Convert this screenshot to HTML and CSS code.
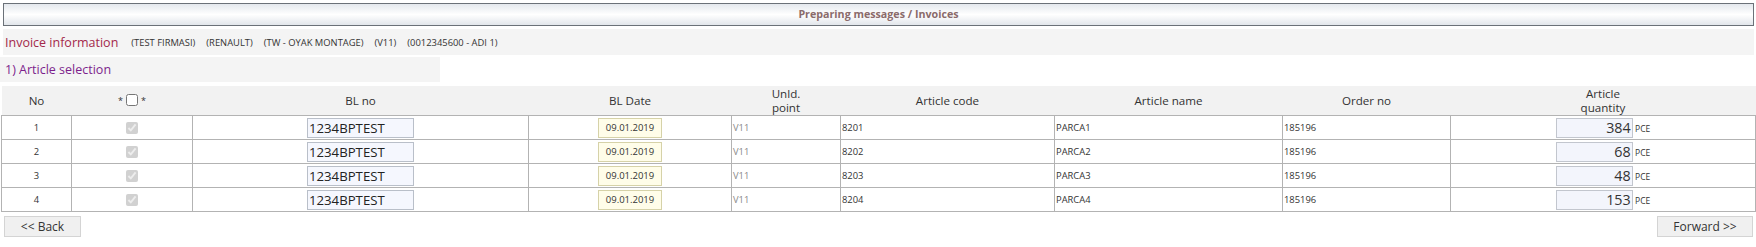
FILE: index.html
```html
<!DOCTYPE html>
<html lang="en">
<head>
  <meta charset="UTF-8" />
  <title>Preparing messages / Invoices</title>
  <link rel="stylesheet" href="styles.css">
</head>
<body>
  <div class="title-bar">Preparing messages / Invoices</div>

  <div class="info-bar">
    <span class="info-title">Invoice information</span>
    <span class="info-item">(TEST FIRMASI)</span>
    <span class="info-item">(RENAULT)</span>
    <span class="info-item">(TW - OYAK MONTAGE)</span>
    <span class="info-item">(V11)</span>
    <span class="info-item">(0012345600 - ADI 1)</span>
  </div>

  <div class="step-bar">1) Article selection</div>

  <table class="grid">
    <colgroup>
      <col style="width:70px">
      <col style="width:121px">
      <col style="width:336px">
      <col style="width:203px">
      <col style="width:109px">
      <col style="width:214px">
      <col style="width:228px">
      <col style="width:168px">
      <col>
    </colgroup>
    <thead>
      <tr>
        <th>No</th>
        <th><span class="star">*</span> <input type="checkbox" class="check-all"> <span class="star">*</span></th>
        <th>BL no</th>
        <th>BL Date</th>
        <th>Unld.<br>point</th>
        <th>Article code</th>
        <th>Article name</th>
        <th>Order no</th>
        <th>Article<br>quantity</th>
      </tr>
    </thead>
    <tbody>
      <tr>
        <td class="center">1</td>
        <td class="center"><input type="checkbox" checked disabled></td>
        <td class="center"><input type="text" class="bl-no" value="1234BPTEST"></td>
        <td class="center"><input type="text" class="bl-date" value="09.01.2019"></td>
        <td class="muted">V11</td>
        <td>8201</td>
        <td>PARCA1</td>
        <td>185196</td>
        <td class="center"><input type="text" class="qty" value="384"> <span class="unit">PCE</span></td>
      </tr>
      <tr>
        <td class="center">2</td>
        <td class="center"><input type="checkbox" checked disabled></td>
        <td class="center"><input type="text" class="bl-no" value="1234BPTEST"></td>
        <td class="center"><input type="text" class="bl-date" value="09.01.2019"></td>
        <td class="muted">V11</td>
        <td>8202</td>
        <td>PARCA2</td>
        <td>185196</td>
        <td class="center"><input type="text" class="qty" value="68"> <span class="unit">PCE</span></td>
      </tr>
      <tr>
        <td class="center">3</td>
        <td class="center"><input type="checkbox" checked disabled></td>
        <td class="center"><input type="text" class="bl-no" value="1234BPTEST"></td>
        <td class="center"><input type="text" class="bl-date" value="09.01.2019"></td>
        <td class="muted">V11</td>
        <td>8203</td>
        <td>PARCA3</td>
        <td>185196</td>
        <td class="center"><input type="text" class="qty" value="48"> <span class="unit">PCE</span></td>
      </tr>
      <tr>
        <td class="center">4</td>
        <td class="center"><input type="checkbox" checked disabled></td>
        <td class="center"><input type="text" class="bl-no" value="1234BPTEST"></td>
        <td class="center"><input type="text" class="bl-date" value="09.01.2019"></td>
        <td class="muted">V11</td>
        <td>8204</td>
        <td>PARCA4</td>
        <td>185196</td>
        <td class="center"><input type="text" class="qty" value="153"> <span class="unit">PCE</span></td>
      </tr>
    </tbody>
  </table>

  <div class="actions">
    <button class="btn">&lt;&lt; Back</button>
    <button class="btn">Forward &gt;&gt;</button>
  </div>
</body>
</html>
```

FILE: styles.css
```css
body {
  font-family: 'Open Sans', 'DejaVu Sans', sans-serif;
  color: #333;
  margin: 0;
  padding: 3px 2px 0 3px;
  background: #fff;
}

.title-bar {
  height: 21px;
  line-height: 21px;
  border: 1px solid #6b7178;
  background: linear-gradient(#e4e8ed, #fff 50%, #e2e6eb);
  text-align: center;
  font-size: 10.7px;
  font-weight: bold;
  color: #8a6b6b;
}

.info-bar {
  margin-top: 3px;
  height: 26px;
  background: #f4f4f4;
  display: flex;
  align-items: center;
  gap: 11px;
  padding-left: 2px;
}
.info-title {
  font-size: 12.5px;
  color: #a3284b;
  margin-right: 2px;
}
.info-item {
  font-size: 9.4px;
  color: #333;
}

.step-bar {
  margin: 2px 0 0 -3px;
  width: 440px;
  height: 25px;
  line-height: 25px;
  padding-left: 5px;
  background: #f4f4f4;
  font-size: 12.5px;
  color: #7d1f8c;
  box-sizing: border-box;
}

.grid {
  margin: 4px 0 0 -2px;
  width: calc(100% + 4px);
  border-collapse: collapse;
  table-layout: fixed;
}
.grid th {
  height: 29px;
  padding: 0;
  background: #f2f2f2;
  font-size: 11.6px;
  font-weight: normal;
  line-height: 14px;
  color: #333;
  border-bottom: 1px solid #b3b3b3;
}
.grid td {
  height: 21px;
  padding: 1px;
  border: 1px solid #b3b3b3;
  font-size: 9.4px;
  color: #333;
}
.grid td.center { text-align: center; }
.grid td.muted { color: #8a8a8a; }

.star { font-size: 9px; }
.check-all {
  margin: 0;
  width: 12px;
  height: 12px;
  vertical-align: -2px;
}
.grid td input[type=checkbox] {
  margin: 0;
  width: 12px;
  height: 12px;
  vertical-align: middle;
}

.grid input[type=text] {
  box-sizing: border-box;
  height: 20px;
  margin: 0;
  padding: 0 1px;
  font-family: 'Open Sans', 'DejaVu Sans', sans-serif;
  vertical-align: middle;
  outline: none;
}
.bl-no {
  width: 107px;
  border: 1px solid #b9bfc9;
  background: #f5f7fe;
  font-size: 13.2px;
  color: #222;
}
.bl-date {
  width: 64px;
  border: 1px solid #d6d2a8;
  background: #fffde9;
  font-size: 9.5px;
  text-align: center;
  color: #333;
}
.qty {
  width: 77px;
  border: 1px solid #c2c6ce;
  background: #f3f5fc;
  font-size: 14.3px;
  text-align: right;
  color: #333;
}
.unit {
  font-size: 8.5px;
  vertical-align: middle;
}

.actions {
  display: flex;
  justify-content: space-between;
  margin-top: 4px;
  padding: 0 1px 0 1px;
}
.btn {
  height: 21px;
  padding: 0 12px;
  border: 1px solid #d4d4d4;
  background: #f0f0f0;
  font-family: 'Open Sans', 'DejaVu Sans', sans-serif;
  font-size: 12px;
  color: #333;
}
.btn:first-child { width: 77px; }
.btn:last-child { width: 96px; }
```
